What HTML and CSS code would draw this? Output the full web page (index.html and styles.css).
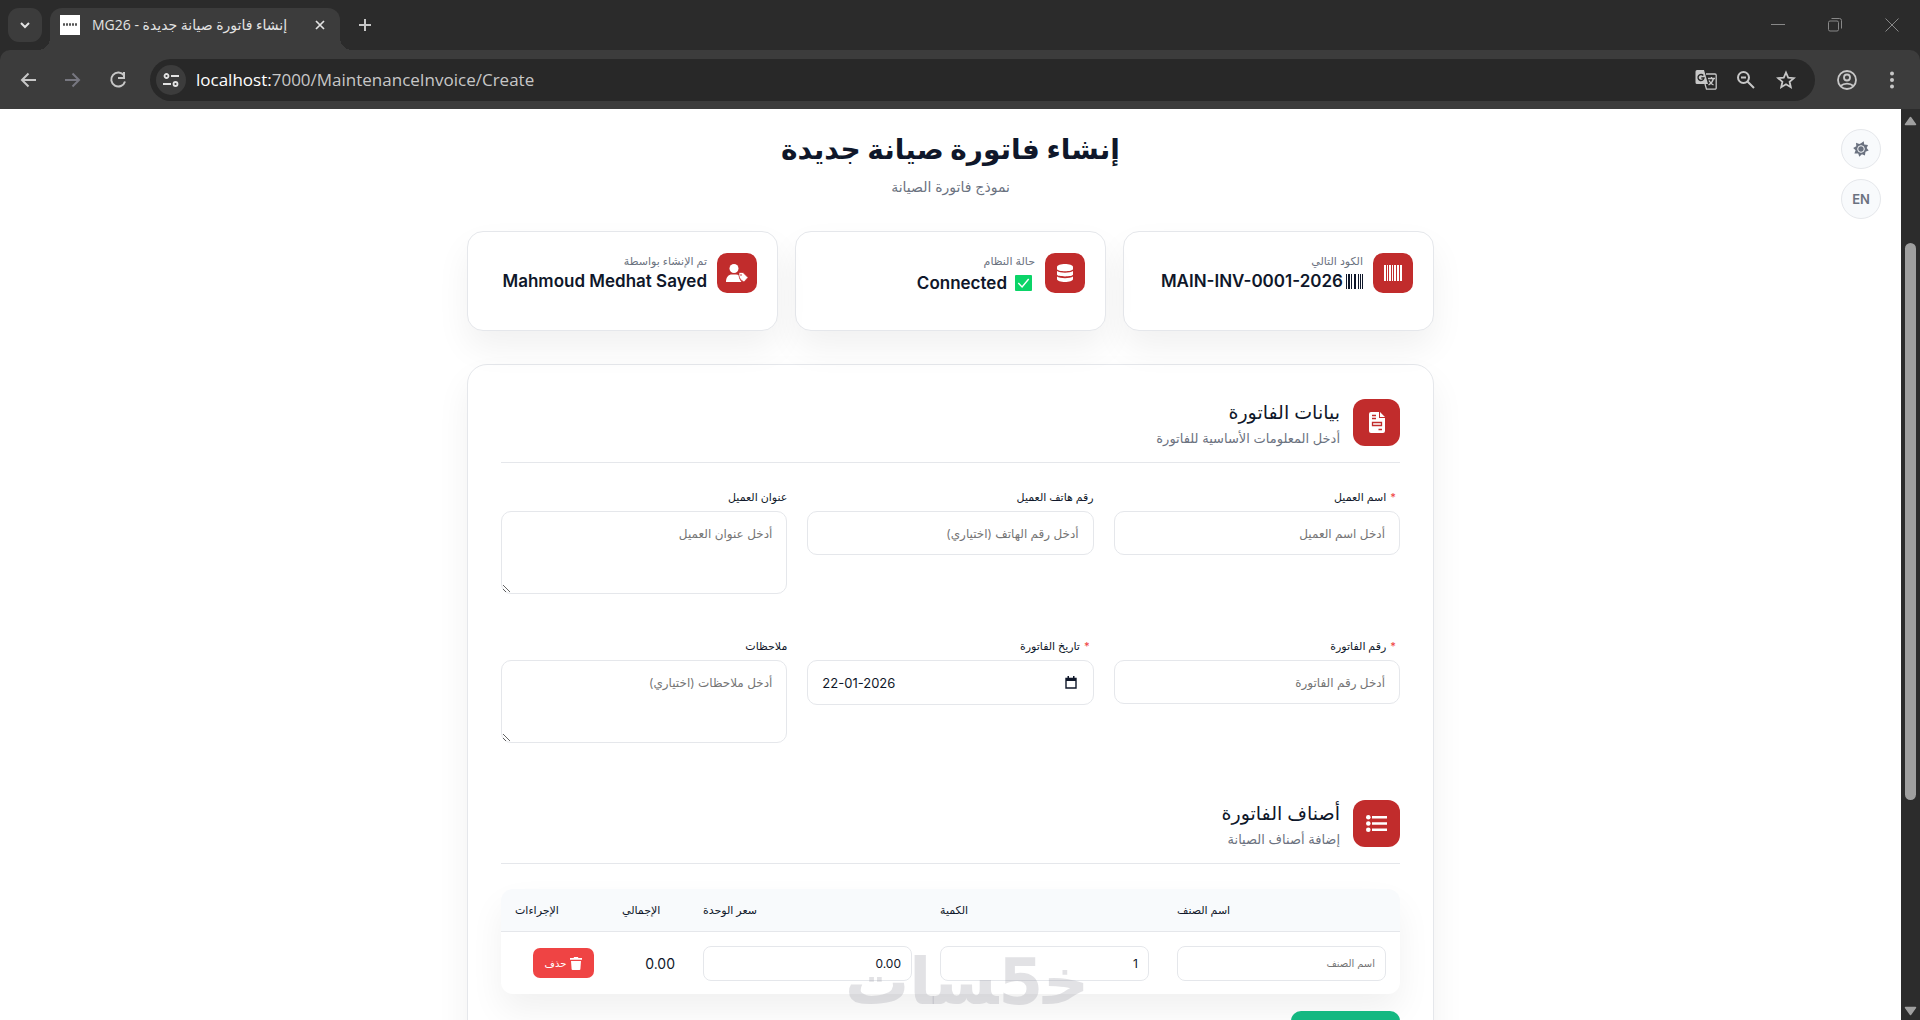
FILE: index.html
```html
<!DOCTYPE html>
<html lang="ar">
<head>
<meta charset="utf-8">
<meta name="viewport" content="width=device-width, initial-scale=1">
<title>إنشاء فاتورة صيانة جديدة - MG26</title>
<link rel="stylesheet" href="styles.css">
</head>
<body>
<div class="browser">
  <header class="tab-strip">
    <button class="tab-search" type="button" aria-label="Search tabs"><svg width="12" height="12" viewBox="0 0 12 12"><path d="M2 4l4 4 4-4" fill="none" stroke="currentColor" stroke-width="2"/></svg></button>
    <div class="tab">
      <svg class="favicon" width="20" height="20" viewBox="0 0 20 20"><path fill="#fff" d="M0 0h20v20H0z"/><path d="M3 9.500h14" stroke="#555" stroke-width="2.500" stroke-dasharray="2 1"/></svg>
      <span class="tab-title" dir="ltr">MG26 - إنشاء فاتورة صيانة جديدة</span>
      <button class="tab-close" type="button" aria-label="Close tab"><svg width="12" height="12" viewBox="0 0 12 12"><path d="M2 2l8 8M10 2l-8 8" stroke="currentColor" stroke-width="1.700"/></svg></button>
    </div>
    <button class="new-tab" type="button" aria-label="New tab"><svg width="14" height="14" viewBox="0 0 14 14"><path d="M7 1v12M1 7h12" stroke="currentColor" stroke-width="2"/></svg></button>
    <div class="window-controls">
      <button type="button" aria-label="Minimize"><svg width="14" height="14" viewBox="0 0 14 14"><path d="M0 6.500h14" stroke="currentColor"/></svg></button>
      <button type="button" aria-label="Restore"><svg width="14" height="14" viewBox="0 0 14 14" fill="none" stroke="currentColor"><rect x=".5" y="3" width="10" height="10" rx="1.500"/><path d="M3.500.5h8a2 2 0 0 1 2 2v8"/></svg></button>
      <button type="button" aria-label="Close"><svg width="14" height="14" viewBox="0 0 14 14"><path d="M.5.5l13 13M13.500.5l-13 13" stroke="currentColor"/></svg></button>
    </div>
  </header>
  <nav class="toolbar">
    <button type="button" aria-label="Back"><svg width="16" height="16" viewBox="0 0 16 16" fill="none" stroke="currentColor" stroke-width="2"><path d="M16 8H2M8.500 1.500L2 8l6.500 6.500"/></svg></button>
    <button class="disabled" type="button" aria-label="Forward"><svg width="16" height="16" viewBox="0 0 16 16" fill="none" stroke="currentColor" stroke-width="2"><path d="M0 8h14M7.500 1.500L14 8l-6.500 6.500"/></svg></button>
    <button type="button" aria-label="Reload"><svg width="18" height="18" viewBox="0 0 18 18" fill="none" stroke="currentColor" stroke-width="2"><path d="M15 4.500A7 7 0 1 0 16 10.500M15 1v6h-6"/></svg></button>
    <div class="omnibox">
      <button class="site-info" type="button" aria-label="Site information"><svg width="16" height="16" viewBox="0 0 16 16" fill="none" stroke="currentColor" stroke-width="1.800"><circle cx="3.500" cy="4" r="2"/><path d="M8 4h8M0 12h8"/><circle cx="12.500" cy="12" r="2"/></svg></button>
      <div class="address"><span class="host">localhost:</span>7000/MaintenanceInvoice/Create</div>
      <button type="button" aria-label="Translate"><svg width="22" height="22" viewBox="0 0 22 22"><path d="M2 1h7l4 14H2a1.500 1.500 0 0 1-1.500-1.500v-11A1.500 1.500 0 0 1 2 1z" fill="#c7c7c7"/><path d="M11 5h9a1.200 1.200 0 0 1 1.200 1.200V19a1.200 1.200 0 0 1-1.200 1.200h-8.500L10 15M13 9.500h7M16.500 8v1.500M18.500 9.500c-.6 2.500-2.500 5-5 6.500M14 11.500c1 2 2.500 3.500 4.500 4.500" fill="none" stroke="#c7c7c7" stroke-width="1.300"/><path d="M8.300 6.500A3 3 0 1 0 9 9H6.300" fill="none" stroke="#282828" stroke-width="1.400"/></svg></button>
      <button type="button" aria-label="Zoom"><svg width="20" height="20" viewBox="0 0 20 20" fill="none" stroke="currentColor" stroke-width="2"><circle cx="7.500" cy="7.500" r="5.500"/><path d="M5 7.500h5M11.500 11.500l6.500 6.500"/></svg></button>
      <button type="button" aria-label="Bookmark"><svg width="20" height="20" viewBox="0 0 20 20" fill="none" stroke="currentColor" stroke-width="1.800"><path d="M10 2.500l2.200 5.100 5.600.5-4.200 3.700 1.200 5.400-4.800-2.900-4.800 2.900 1.200-5.400-4.200-3.700 5.600-.5z"/></svg></button>
    </div>
    <button type="button" aria-label="Profile"><svg width="22" height="22" viewBox="0 0 22 22" fill="none" stroke="currentColor" stroke-width="1.800"><circle cx="11" cy="11" r="9"/><circle cx="11" cy="8.500" r="3"/><path d="M4.500 17c3.500-3.300 9.500-3.300 13 0"/></svg></button>
    <button type="button" aria-label="Menu"><svg width="20" height="20" viewBox="0 0 20 20" fill="currentColor"><circle cx="10" cy="3.500" r="2"/><circle cx="10" cy="10" r="2"/><circle cx="10" cy="16.500" r="2"/></svg></button>
  </nav>

  <div class="viewport">
    <main class="page" dir="rtl">
      <div class="quick-actions">
        <button type="button" aria-label="الوضع"><svg width="16" height="16" viewBox="0 0 16 16"><path fill="currentColor" d="M8 2.200L10.700.3 11.200 3.500 15 4 13.700 7l2 2.500-3.200 1.300-.6 3.600L8.900 13.200 6.300 15.700 5.200 12.400 1.400 12.600 2.600 9.300.2 7 3.300 5.300 3 1.700 6.300 3.100z"/><circle cx="8" cy="8" r="3.300" fill="currentColor" stroke="#f8fafc"/></svg></button>
        <button type="button">EN</button>
      </div>

      <div class="container">
        <div class="page-head">
          <h1>إنشاء فاتورة صيانة جديدة</h1>
          <p>نموذج فاتورة الصيانة</p>
        </div>

        <section class="stats">
          <article class="stat">
            <span class="stat-icon"><svg width="18" height="16" viewBox="0 0 18 16"><path fill="#fff" d="M0 0h2v16H0zM3 0h1v16H3zM5 0h2v16H5zM8 0h1v16H8zM10 0h2v16h-2zM13 0h2v16h-2zM16 0h2v16h-2z"/></svg></span>
            <div class="stat-text">
              <p>الكود التالي</p>
              <strong><svg width="17" height="15" viewBox="0 0 17 15"><path fill="currentColor" d="M0 0h1v15H0zM2 0h2v15H2zM5 0h1v15H5zM8 0h2v15H8zM12 0h1v15h-1zM14 0h1v15h-1zM16 0h1v15h-1z"/></svg><bdi>MAIN-INV-0001-2026</bdi></strong>
            </div>
          </article>
          <article class="stat">
            <span class="stat-icon"><svg width="16" height="18" viewBox="0 0 16 18" fill="#fff"><path d="M0 3c0-4 16-4 16 0v2c0 3-16 3-16 0z"/><path d="M0 7c3 2.200 13 2.200 16 0v3.500c0 2.500-16 2.500-16 0z"/><path d="M0 12.500c3 2.200 13 2.200 16 0V15c0 4-16 4-16 0z"/></svg></span>
            <div class="stat-text">
              <p>حالة النظام</p>
              <strong class="connected"><svg width="17" height="16" viewBox="0 0 18 16" preserveAspectRatio="none"><rect width="18" height="16" rx="1" fill="#0bd468"/><path d="M3.500 8l4 4 7-8" fill="none" stroke="#fff" stroke-width="1.500"/></svg><bdi>Connected</bdi></strong>
            </div>
          </article>
          <article class="stat">
            <span class="stat-icon"><svg width="22" height="18" viewBox="0 0 22 18" fill="#fff"><circle cx="8" cy="4.500" r="4.500"/><path d="M0 18c0-5 2.500-7.500 6-7.500h4c1.300 0 2.300.4 3 1 0 2.500.8 4.500 2.500 6.500z"/><path d="M13 8.500h4l5 5-4 4.500c-3-1.500-5-4-5-6.500z" stroke="#c12c2c" stroke-width=".7"/><circle cx="15" cy="11" r=".8" fill="#c12c2c"/></svg></span>
            <div class="stat-text">
              <p>تم الإنشاء بواسطة</p>
              <strong><bdi>Mahmoud Medhat Sayed</bdi></strong>
            </div>
          </article>
        </section>

        <form class="invoice">
          <div class="section-head">
            <span class="section-icon"><svg width="16" height="21" viewBox="0 0 16 21"><path fill="#fff" d="M2 0h8v6h6v13a2 2 0 0 1-2 2H2a2 2 0 0 1-2-2V2a2 2 0 0 1 2-2zM11 0l5 5h-5z"/><path d="M3 3.500h4M3 6.500h4M9.500 17.500H13M3.500 10.500h9v3h-9z" fill="none" stroke="#c12c2c" stroke-width="1.300"/></svg></span>
            <div><h2>بيانات الفاتورة</h2><p>أدخل المعلومات الأساسية للفاتورة</p></div>
          </div>
          <div class="fields">
            <div class="field"><label for="customer"><span class="required">*</span>اسم العميل</label><input id="customer" type="text" placeholder="أدخل اسم العميل"></div>
            <div class="field"><label for="phone">رقم هاتف العميل</label><input id="phone" type="tel" dir="rtl" placeholder="أدخل رقم الهاتف (اختياري)"></div>
            <div class="field"><label for="address">عنوان العميل</label><textarea id="address" placeholder="أدخل عنوان العميل"></textarea></div>
            <div class="field"><label for="number"><span class="required">*</span>رقم الفاتورة</label><input id="number" type="text" placeholder="أدخل رقم الفاتورة"></div>
            <div class="field"><label for="date"><span class="required">*</span>تاريخ الفاتورة</label>
              <div class="date-box"><button type="button" aria-label="اختر التاريخ"><svg width="12" height="13" viewBox="0 0 12 13"><path d="M1 2.500h10v9.500H1z" fill="none" stroke="currentColor" stroke-width="1.400"/><path d="M1 2h10v3H1zM2.500 0h1.500v2H2.500zM8 0h1.500v2H8z" fill="currentColor"/></svg></button><input id="date" type="text" dir="ltr" value="22-01-2026"></div></div>
            <div class="field"><label for="notes">ملاحظات</label><textarea id="notes" placeholder="أدخل ملاحظات (اختياري)"></textarea></div>
          </div>

          <div class="section-head">
            <span class="section-icon"><svg width="21" height="17" viewBox="0 0 21 17" fill="#fff"><circle cx="2.300" cy="2.300" r="2.300"/><circle cx="2.300" cy="8.500" r="2.300"/><circle cx="2.300" cy="14.700" r="2.300"/><path d="M6 1h15v2.600H6zM6 7.200h15v2.600H6zM6 13.400h15V16H6z"/></svg></span>
            <div><h2>أصناف الفاتورة</h2><p>إضافة أصناف الصيانة</p></div>
          </div>
          <table class="items">
            <thead><tr><th class="wide">اسم الصنف</th><th class="wide">الكمية</th><th class="wide">سعر الوحدة</th><th class="total">الإجمالي</th><th>الإجراءات</th></tr></thead>
            <tbody><tr>
              <td><input class="item-name" type="text" aria-label="اسم الصنف" placeholder="اسم الصنف"></td>
              <td><input type="text" aria-label="الكمية" value="1"></td>
              <td><input type="text" aria-label="سعر الوحدة" value="0.00"></td>
              <td>0.00</td>
              <td><button class="delete" type="button"><svg width="12" height="13" viewBox="0 0 12 13"><path fill="currentColor" d="M0 1h3.500l.7-1h3.600l.7 1H12v1.800H0zM1 4h10l-.6 8a1 1 0 0 1-1 1H2.600a1 1 0 0 1-1-1z"/></svg>حذف</button></td>
            </tr></tbody>
          </table>
          <button class="add" type="button" aria-label="إضافة صنف"></button>
        </form>
      </div>
    </main>
    <div class="scrollbar" aria-hidden="true">
      <svg width="13" height="10" viewBox="0 0 13 10"><path d="M6.500 1.500L11.500 8.500h-10z" fill="currentColor" stroke="currentColor" stroke-width="1.500" stroke-linejoin="round"/></svg>
      <div class="track"><div class="thumb"></div></div>
      <svg width="13" height="10" viewBox="0 0 13 10"><path d="M6.500 8.500L1.500 1.500h10z" fill="currentColor" stroke="currentColor" stroke-width="1.500" stroke-linejoin="round"/></svg>
    </div>
    <div class="watermark" dir="rtl"><span>خ&zwj;</span><span>5</span><span>&zwj;سات</span></div>
  </div>
</div>
</body>
</html>
```
FILE: styles.css
```css
* { box-sizing: border-box; }
body { margin: 0; font-family: "Inter", "DejaVu Sans", sans-serif; color: #0f172a; }
h1, h2, p { margin: 0; }
button, input, textarea { font: inherit; color: inherit; }
button { border: 0; padding: 0; background: none; display: flex; align-items: center; justify-content: center; }
svg { flex: none; display: block; }
.browser { height: 100vh; display: flex; flex-direction: column; overflow: hidden; background: #2b2b2b; }

.tab-strip { height: 50px; flex: none; display: flex; color: #e3e3e3; }
.tab-search { width: 34px; height: 34px; margin: 8px; border-radius: 11px; background: #3c3c3c; }
.tab { position: relative; width: 290px; height: 42px; margin-top: 8px; padding: 0 14px 8px 10px; display: flex; align-items: center; border-radius: 12px 12px 0 0; background: #3c3c3c; }
.tab::before, .tab::after { content: ""; position: absolute; bottom: 0; width: 12px; height: 12px; }
.tab::before { right: 100%; background: radial-gradient(circle at 0 0, transparent 12px, #3c3c3c 12px); }
.tab::after { left: 100%; background: radial-gradient(circle at 100% 0, transparent 12px, #3c3c3c 12px); }
.tab-title { flex: 1; margin: 0 12px; font: 14px/20px "Open Sans", "DejaVu Sans", sans-serif; white-space: nowrap; overflow: hidden; }
.new-tab { width: 34px; height: 34px; margin: 8px; color: #c7c7c7; }
.window-controls { margin-left: auto; display: flex; color: #888; }
.window-controls button { width: 57px; height: 49px; }

.toolbar { height: 59px; flex: none; padding: 0 8px; display: flex; align-items: center; gap: 5px; border-radius: 10px 10px 0 0; background: #3c3c3c; color: #c7c7c7; }
.toolbar button { width: 40px; height: 40px; flex: none; }
.toolbar .disabled { color: #777780; }
.omnibox { flex: 1; height: 42px; margin: 0 7px; padding: 0 9px 0 6px; display: flex; align-items: center; border-radius: 21px; background: #282828; }
.toolbar .site-info { width: 30px; height: 30px; border-radius: 15px; background: #3c3c3c; color: #e3e3e3; }
.address { flex: 1; margin-left: 10px; font: 17px/24px "Open Sans", sans-serif; color: #c7c7c7; }
.host { color: #fff; }

.viewport { flex: 1; min-height: 0; position: relative; display: flex; background: #fff; }
.page { flex: 1; position: relative; padding: 18px 24px; overflow: hidden; }
.scrollbar { width: 19px; padding: 7px 0 4px; display: flex; flex-direction: column; align-items: center; background: #2c2c2c; color: #9f9f9f; }
.track { flex: 1; width: 11px; padding-top: 117px; }
.thumb { height: 73%; border-radius: 6px; background: #9f9f9f; }

.quick-actions { position: absolute; top: 20px; right: 20px; display: flex; flex-direction: column; gap: 10px; }
.quick-actions button { width: 40px; height: 40px; border: 1px solid #e5e7eb; border-radius: 20px; background: #f8fafc; color: #6b7280; font-size: 13px; font-weight: 600; }

.container { max-width: 967px; margin: 0 auto; }
.page-head { height: 104px; text-align: center; }
h1 { font-size: 28px; line-height: 44px; font-weight: 700; }
.page-head p { margin-top: 4px; font-size: 14px; line-height: 24px; color: #6b7280; }

.stats { display: grid; grid-template-columns: repeat(3, 1fr); gap: 17px; }
.stat { height: 100px; padding: 21px 20px; display: flex; align-items: flex-start; gap: 10px; border: 1px solid #e5e7eb; border-radius: 16px; background: #fff; box-shadow: 0 17px 34px rgba(0, 0, 0, .06); }
.stat-icon { width: 40px; height: 40px; display: flex; align-items: center; justify-content: center; border-radius: 10px; background: #c12c2c; }
.stat-text p { font-size: 11px; line-height: 17px; color: #6b7280; }
.stat strong { display: flex; align-items: center; gap: 3px; font-size: 17px; line-height: 22px; font-weight: 600; white-space: nowrap; }
.stat .connected { gap: 8px; padding: 0 3px; line-height: 26px; }

.invoice { margin-top: 33px; padding: 34px 33px; border: 1px solid #e5e7eb; border-radius: 20px; background: #fff; box-shadow: 0 17px 34px rgba(0, 0, 0, .06); }
.section-head { height: 64px; margin-bottom: 25px; display: flex; align-items: flex-start; gap: 13px; border-bottom: 1px solid #e5e7eb; }
.section-icon { width: 47px; height: 47px; display: flex; align-items: center; justify-content: center; border-radius: 12px; background: #c12c2c; }
h2 { font-size: 19px; line-height: 28px; font-weight: 500; }
.section-head p { font-size: 13px; line-height: 22px; color: #6b7280; }
.fields { display: grid; grid-template-columns: repeat(3, 1fr); column-gap: 20px; row-gap: 43px; margin-bottom: 57px; }
.field { display: flex; flex-direction: column; }
.field label { height: 23px; font-size: 11px; line-height: 18px; font-weight: 500; }
.required { margin: 0 4px; color: #ef4444; }
input, textarea { width: 100%; height: 44px; padding: 0 14px; border: 1px solid #e5e7eb; border-radius: 10px; background: #fff; font-size: 13px; outline: 0; }
textarea { height: 83px; padding: 12px 14px; line-height: 20px; resize: both; display: block; }
.field ::placeholder { color: #757575; opacity: 1; font-size: 12px; }
.date-box { height: 45px; padding: 0 16px 0 14px; display: flex; align-items: center; border: 1px solid #e5e7eb; border-radius: 10px; }
.date-box input { height: 40px; padding: 0; border: 0; }

.items { width: 100%; border-spacing: 0; border-radius: 12px; overflow: hidden; box-shadow: 0 17px 34px rgba(0, 0, 0, .06); }
.items th { height: 43px; padding: 0 14px; background: #f8fafc; border-bottom: 1px solid #e5e7eb; text-align: left; font-size: 11px; font-weight: 500; white-space: nowrap; }
.items .wide { width: 237px; }
.items .total { width: 81px; }
.items td { height: 62px; padding: 0 14px; font-size: 14px; }
.items input { display: block; height: 35px; padding: 0 10px; border-radius: 8px; font-size: 12px; }
.items .item-name { font-size: 10px; }
.delete { width: 61px; height: 30px; gap: 4px; border-radius: 7px; background: #ef4444; color: #fff; font-size: 10px; }
.add { width: 109px; height: 40px; margin-top: 17px; border-radius: 10px; background: #14b881; }

.watermark { position: absolute; left: 845px; bottom: 0; display: flex; font: 700 64px/76px "DejaVu Sans", sans-serif; color: rgba(150, 150, 160, .28); pointer-events: none; }
```
